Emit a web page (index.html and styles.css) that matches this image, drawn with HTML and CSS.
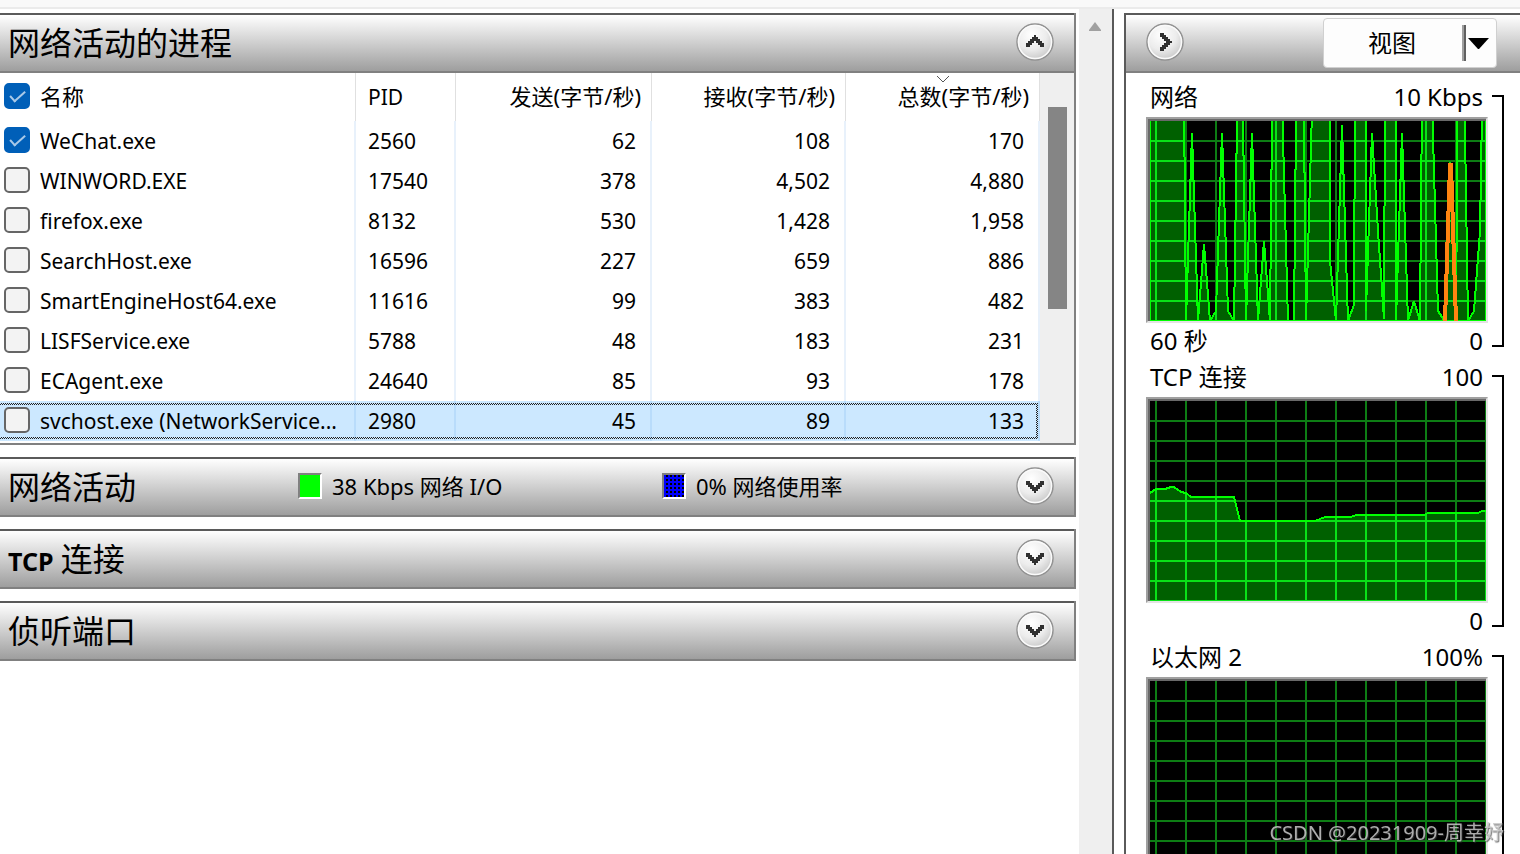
FILE: index.html
```html
<!DOCTYPE html>
<html lang="zh-CN">
<head>
<meta charset="utf-8">
<title>资源监视器 - 网络</title>
<link rel="stylesheet" href="styles.css">
</head>
<body>
<svg class="defs" aria-hidden="true">
  <defs>
    <radialGradient id="knob" cx="40%" cy="30%" r="75%">
      <stop offset="0" stop-color="#ffffff"/>
      <stop offset="0.55" stop-color="#ececec"/>
      <stop offset="1" stop-color="#c4c4c4"/>
    </radialGradient>
    <symbol id="down" viewBox="0 0 38 38">
      <circle cx="19" cy="19" r="18" fill="url(#knob)" stroke="#929292" stroke-width="1.5"/>
      <circle cx="19" cy="19" r="16.5" fill="none" stroke="#fafafa" stroke-width="1.5"/>
      <path d="M10 14h4v2h2v2h2v2h2v-2h2v-2h2v-2h4v4h-2v2h-2v2h-2v2h-2v2h-2v-2h-2v-2h-2v-2h-2v-2h-2z" fill="#303030"/>
    </symbol>
    <symbol id="up" viewBox="0 0 38 38">
      <circle cx="19" cy="19" r="18" fill="url(#knob)" stroke="#929292" stroke-width="1.5"/>
      <circle cx="19" cy="19" r="16.5" fill="none" stroke="#fafafa" stroke-width="1.5"/>
      <path d="M10 24h4v-2h2v-2h2v-2h2v2h2v2h2v2h4v-4h-2v-2h-2v-2h-2v-2h-2v-2h-2v2h-2v2h-2v2h-2v2h-2z" fill="#303030"/>
    </symbol>
    <symbol id="right" viewBox="0 0 38 38">
      <circle cx="19" cy="19" r="18" fill="url(#knob)" stroke="#929292" stroke-width="1.5"/>
      <circle cx="19" cy="19" r="16.5" fill="none" stroke="#fafafa" stroke-width="1.5"/>
      <path d="M14 10v4h2v2h2v2h2v2h-2v2h-2v2h-2v4h4v-2h2v-2h2v-2h2v-2h2v-2h-2v-2h-2v-2h-2v-2h-2v-2z" fill="#303030"/>
    </symbol>
    <path id="grid" d="M6 0V200M36 0V200M66 0V200M96 0V200M126 0V200M156 0V200M186 0V200M216 0V200M246 0V200M276 0V200M306 0V200M336 0V200M0 20H336M0 40H336M0 60H336M0 80H336M0 100H336M0 120H336M0 140H336M0 160H336M0 180H336M0 200H336"/>
    <clipPath id="net-area">
      <path id="net-fill" d="M0 200V-20H34L36 200 42 12 48 200 54 123 60 200 66 190 72 12 78 190 84 200 90-200 96 200 102 12 108 200 114 120 120 200 126-400 132-20 138 200 144 200 150-400 156 200 162-10H180V140L186 200 192 4 198 200 204 184 205-20H216V190L222 12 228 110 234 198 235-20H246V200L252 12 258 200 264 180 270 200 272-20H282L288 190 294 199 300 41 306 200 309-200 312-180 318 200 324 190 330 110 332-10H336V200z"/>
    </clipPath>
    <clipPath id="tcp-area">
      <path id="tcp-fill" d="M-3 202V94L0 92 6 88H15L21 86H24L31 91 36 92 41 96H84L90 120H165L175 116H201L206 114H274L278 112H328L332 110H339V202z"/>
    </clipPath>
  </defs>
</svg>

<div class="strip"></div>
<div class="window">
  <main class="sections">
    <section class="panel">
      <header class="bar">
        <h2 class="title">网络活动的进程</h2>
        <button class="round" type="button" aria-label="折叠"><svg><use href="#up"/></svg></button>
      </header>
      <div class="list">
        <table class="processes">
          <colgroup><col><col class="c-pid"><col class="c-send"><col class="c-num"><col class="c-num"></colgroup>
          <thead>
            <tr>
              <th><label class="pick"><input type="checkbox" checked><span>名称</span></label></th>
              <th class="pid">PID</th>
              <th class="num">发送(字节/秒)</th>
              <th class="num">接收(字节/秒)</th>
              <th class="num sorted">总数(字节/秒)<svg class="caret" viewBox="0 0 14 8"><path d="M1 1l6 6 6-6"/></svg></th>
            </tr>
          </thead>
          <tbody>
            <tr><td><label class="pick"><input type="checkbox" checked><span>WeChat.exe</span></label></td><td>2560</td><td class="num">62</td><td class="num">108</td><td class="num">170</td></tr>
            <tr><td><label class="pick"><input type="checkbox"><span>WINWORD.EXE</span></label></td><td>17540</td><td class="num">378</td><td class="num">4,502</td><td class="num">4,880</td></tr>
            <tr><td><label class="pick"><input type="checkbox"><span>firefox.exe</span></label></td><td>8132</td><td class="num">530</td><td class="num">1,428</td><td class="num">1,958</td></tr>
            <tr><td><label class="pick"><input type="checkbox"><span>SearchHost.exe</span></label></td><td>16596</td><td class="num">227</td><td class="num">659</td><td class="num">886</td></tr>
            <tr><td><label class="pick"><input type="checkbox"><span>SmartEngineHost64.exe</span></label></td><td>11616</td><td class="num">99</td><td class="num">383</td><td class="num">482</td></tr>
            <tr><td><label class="pick"><input type="checkbox"><span>LISFService.exe</span></label></td><td>5788</td><td class="num">48</td><td class="num">183</td><td class="num">231</td></tr>
            <tr><td><label class="pick"><input type="checkbox"><span>ECAgent.exe</span></label></td><td>24640</td><td class="num">85</td><td class="num">93</td><td class="num">178</td></tr>
            <tr class="selected"><td><label class="pick"><input type="checkbox"><span>svchost.exe (NetworkService...</span></label></td><td>2980</td><td class="num">45</td><td class="num">89</td><td class="num">133</td></tr>
          </tbody>
        </table>
        <div class="list-scroll"><div class="thumb"></div></div>
      </div>
    </section>

    <section class="panel">
      <header class="bar">
        <h2 class="title titled">网络活动</h2>
        <p class="legend"><i class="swatch green"></i>38 Kbps 网络 I/O</p>
        <p class="legend"><i class="swatch blue"></i>0% 网络使用率</p>
        <button class="round" type="button" aria-label="展开"><svg><use href="#down"/></svg></button>
      </header>
    </section>
    <section class="panel">
      <header class="bar">
        <h2 class="title"><b>TCP</b> 连接</h2>
        <button class="round" type="button" aria-label="展开"><svg><use href="#down"/></svg></button>
      </header>
    </section>
    <section class="panel">
      <header class="bar">
        <h2 class="title">侦听端口</h2>
        <button class="round" type="button" aria-label="展开"><svg><use href="#down"/></svg></button>
      </header>
    </section>
  </main>

  <div class="page-scroll"><svg viewBox="0 0 12 9"><path d="M6 0l6 8v1H0V8z"/></svg></div>

  <aside class="side">
    <header class="bar side-bar">
      <button class="round" type="button" aria-label="隐藏图形"><svg><use href="#right"/></svg></button>
      <button class="view" type="button"><span class="view-text">视图</span><svg class="drop" viewBox="0 0 21 11"><path d="M0 0h21L11 11h-1z"/></svg></button>
    </header>
    <div class="charts">
      <section class="chart">
        <div class="plot">
          <div class="caption"><span>网络</span><span>10 Kbps</span></div>
          <svg class="graph" viewBox="0 0 336 200" preserveAspectRatio="none">
            <use href="#grid" class="g-dim"/>
            <use href="#net-fill" class="g-fill"/>
            <use href="#grid" class="g-bright" clip-path="url(#net-area)"/>
            <use href="#net-fill" class="g-line"/>
            <path class="g-orange" d="M295 200l5-156h1l5 156"/>
          </svg>
          <div class="caption foot"><span>60 秒</span><span>0</span></div>
        </div>
        <div class="bracket"></div>
      </section>
      <section class="chart">
        <div class="plot">
          <div class="caption"><span>TCP 连接</span><span>100</span></div>
          <svg class="graph" viewBox="0 0 336 200" preserveAspectRatio="none">
            <use href="#grid" class="g-dim"/>
            <use href="#tcp-fill" class="g-fill"/>
            <use href="#grid" class="g-bright" clip-path="url(#tcp-area)"/>
            <use href="#tcp-fill" class="g-line"/>
          </svg>
          <div class="caption foot"><span></span><span>0</span></div>
        </div>
        <div class="bracket"></div>
      </section>
      <section class="chart">
        <div class="plot">
          <div class="caption"><span>以太网 2</span><span>100%</span></div>
          <svg class="graph" viewBox="0 0 336 200" preserveAspectRatio="none">
            <use href="#grid" class="g-dim"/>
          </svg>
        </div>
        <div class="bracket"></div>
      </section>
    </div>
  </aside>
</div>
<div class="watermark">CSDN @20231909-周幸妤</div>
</body>
</html>
```

FILE: styles.css
```css
* { box-sizing: border-box; }

body {
  margin: 0;
  height: 100vh;
  overflow: hidden;
  display: flex;
  flex-direction: column;
  background: #fff;
  color: #000;
  font-family: "Noto Sans", "Noto Sans CJK SC", sans-serif;
  font-size: 21px;
}

button, input { font: inherit; margin: 0; }
h2, p { margin: 0; font-weight: 400; }

.defs { position: absolute; width: 0; height: 0; }

.strip {
  flex: none;
  height: 9px;
  background: #f9f9f9;
  border-bottom: 2px solid #ebebeb;
}

.window { flex: 1; min-height: 0; display: flex; }

.sections {
  flex: 1;
  min-width: 0;
  padding-top: 4px;
  display: flex;
  flex-direction: column;
  gap: 12px;
}

.panel { flex: none; border-right: 2px solid #808080; }

.bar {
  height: 60px;
  display: flex;
  align-items: center;
  border-top: 2px solid #5a5a5a;
  border-bottom: 2px solid #808080;
  background: linear-gradient(#fff, #9e9e9e);
  padding: 0 20px 0 8px;
}

.title {
  flex: 1;
  padding-bottom: 4px;
  font-family: "Noto Sans CJK SC", sans-serif;
  font-size: 32px;
  line-height: 40px;
  white-space: nowrap;
}
.title b { font: bold 25px "Noto Sans", sans-serif; }
.titled { flex: 0 0 290px; }

.legend {
  flex: 0 0 364px;
  display: flex;
  align-items: center;
  gap: 10px;
  padding-bottom: 2px;
  font-size: 22px;
  line-height: 28px;
}
.legend + .legend { flex: 1; }

.swatch {
  width: 24px;
  height: 26px;
  border: 2px solid #fff;
  border-top-color: #808080;
  border-left-color: #808080;
}
.green { background: #0f0; }
.blue {
  background: conic-gradient(#000 25%, #00f 0) padding-box;
  background-size: 4px 4px;
}

.round {
  flex: none;
  width: 38px;
  height: 38px;
  margin-bottom: 2px;
  padding: 0;
  border: 0;
  background: none;
}
.round svg { display: block; width: 38px; height: 38px; }

.list { display: flex; border-bottom: 2px solid #808080; }

.processes {
  flex: 1;
  min-width: 0;
  table-layout: fixed;
  border-collapse: separate;
  border-spacing: 0;
  margin-bottom: 2px;
}
.c-pid { width: 100px; }
.c-send { width: 196px; }
.c-num { width: 194px; }

th, td {
  padding: 0 0 0 12px;
  text-align: left;
  font-weight: 400;
  border-right: 2px solid #e8f1fb;
  white-space: nowrap;
}
th { height: 48px; padding-bottom: 2px; font-size: 22px; line-height: 30px; border-right: 1px solid #e0e0e0; }
td { height: 40px; line-height: 30px; }
th:first-child, td:first-child { padding-left: 4px; }
td.num { padding-right: 14px; text-align: right; }
th.num { padding-right: 10px; text-align: right; }
th.pid { padding-bottom: 0; font-size: 21px; }

.sorted { position: relative; }
.caret {
  position: absolute;
  top: 2px;
  left: calc(50% - 7px);
  width: 14px;
  height: 8px;
  fill: none;
  stroke: #555;
}

.pick { display: flex; align-items: center; gap: 10px; }
.pick input {
  appearance: none;
  flex: none;
  width: 26px;
  height: 26px;
  margin-bottom: 2px;
  border: 2px solid #666;
  border-radius: 5px;
  background: #f3f3f3;
  display: grid;
  place-items: center;
}
th .pick input { margin-bottom: 0; }
.pick input:checked { background: #005fb8; border-color: #005fb8; }
.pick input:checked::before {
  content: "";
  width: 13px;
  height: 6px;
  border-left: 2px solid #a9c9e8;
  border-bottom: 2px solid #a9c9e8;
  transform: rotate(-42deg) translate(1px, -1px);
}

.selected { position: relative; }
.selected td { background: #cce8ff; border-right-color: #b9dcfb; }
.selected::after {
  content: "";
  position: absolute;
  inset: 2px 2px 2px 0;
  pointer-events: none;
  background: conic-gradient(#222 25%, transparent 0 50%, #222 0 75%, transparent 0) 0 0 / 2px 2px;
  clip-path: polygon(0 0, 100% 0, 100% 100%, 0 100%, 0 calc(100% - 2px), calc(100% - 2px) calc(100% - 2px), calc(100% - 2px) 2px, 0 2px);
}

.list-scroll { flex: none; width: 34px; padding: 34px 7px 0 8px; background: #efefef; }
.thumb { height: 202px; background: #858585; }

.page-scroll {
  flex: none;
  width: 35px;
  margin: 0 10px 0 3px;
  padding: 13px 2px 0 0;
  background: #efefef;
  border-right: 2px solid #5a5a5a;
}
.page-scroll svg { display: block; margin: 0 auto; width: 12px; height: 9px; fill: #a0a0a0; }

.side {
  flex: none;
  width: 396px;
  margin-top: 4px;
  border-left: 2px solid #5a5a5a;
  overflow: hidden;
}
.side-bar { justify-content: space-between; padding: 0 23px 0 20px; }

.view {
  width: 174px;
  height: 50px;
  padding: 0 7px 0 0;
  display: flex;
  align-items: center;
  border: 1px solid #d0d0d0;
  border-radius: 4px;
  background: #fdfdfd;
  color: #000;
  font-size: 24px;
}
.view-text {
  flex: 1;
  height: 36px;
  padding-right: 2px;
  line-height: 36px;
  text-align: center;
  border-right: 2px solid #a0a0a0;
  box-shadow: 2px 0 #606060;
}
.drop { width: 21px; height: 11px; margin-left: 4px; }

.charts { padding: 4px 16px 0 20px; }
.chart { display: flex; height: 280px; gap: 4px; }
.plot { flex: 1; min-width: 0; }

.caption {
  height: 40px;
  padding: 0 5px 0 4px;
  display: flex;
  justify-content: space-between;
  align-items: center;
  font-size: 24px;
  line-height: 32px;
}
.foot { height: 35px; }

.graph {
  display: block;
  width: 100%;
  height: 206px;
  padding: 2px 0 0 2px;
  background: #000;
  border: 2px solid #e3e3e3;
  border-top-color: #a0a0a0;
  border-left-color: #a0a0a0;
  box-shadow: inset 2px 2px #696969;
}
.g-dim { stroke: #0d7d14; stroke-width: 2; shape-rendering: crispEdges; }
.g-fill { fill: #006000; }
.g-bright { stroke: #09e217; stroke-width: 2; shape-rendering: crispEdges; }
.g-line { fill: none; stroke: #0f0; stroke-width: 2; stroke-linejoin: bevel; shape-rendering: crispEdges; }
.g-orange { fill: none; stroke: #ff8410; stroke-width: 4; shape-rendering: crispEdges; }

.bracket {
  width: 12px;
  height: 252px;
  margin-top: 18px;
  border: 2px solid #000;
  border-left: 0;
}

.watermark {
  position: fixed;
  right: 16px;
  bottom: 6px;
  font-size: 20px;
  line-height: 30px;
  color: rgba(200, 200, 200, 0.85);
  text-shadow: 1px 1px 1px rgba(60, 60, 60, 0.7);
}
```
